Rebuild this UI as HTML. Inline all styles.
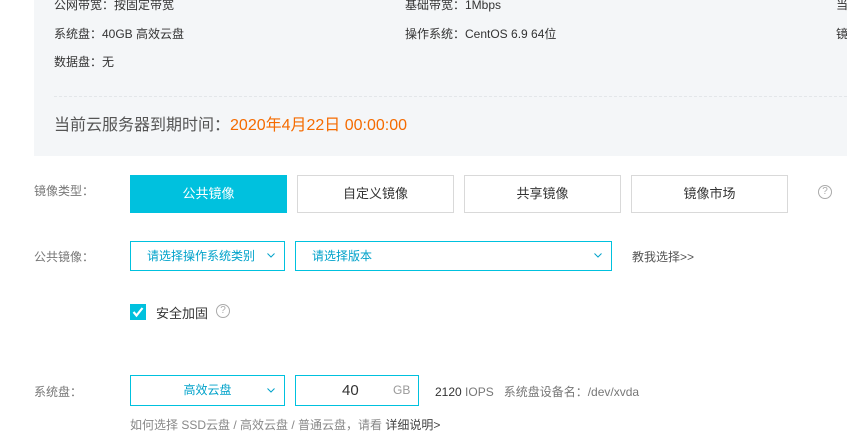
<!DOCTYPE html>
<html><head><meta charset="utf-8"><style>
*{margin:0;padding:0;box-sizing:border-box}
body{width:847px;height:435px;background:#fff;font-family:"Liberation Sans","Noto Sans CJK SC",sans-serif;font-size:12px;color:#333;position:relative;overflow:hidden}
.a{position:absolute;white-space:nowrap}
.panel{position:absolute;left:34px;top:0;width:813px;height:156px;background:#f4f6f8}
.dash{position:absolute;left:54px;top:96px;width:793px;border-top:1px dashed #e3e6e9}
.btn{position:absolute;top:175px;height:38px;width:157px;border:1px solid #d9d9d9;background:#fff;text-align:center;line-height:36px;font-size:13px;color:#333}
.sel{position:absolute;border:1px solid #00c1de;background:#fff;color:#00a2ca;font-size:12px;line-height:28px}
.lbl{color:#777}
.arr{position:absolute;right:9px;top:50%;margin-top:-3px;width:8px;height:5px}
</style></head><body>
<div class="panel"></div>
<div class="a" style="left:54px;top:-4px">公网带宽：按固定带宽</div>
<div class="a" style="left:405px;top:-4px">基础带宽：1Mbps</div>
<div class="a" style="left:836px;top:-4px">当</div>
<div class="a" style="left:54px;top:25px">系统盘：40GB 高效云盘</div>
<div class="a" style="left:405px;top:25px">操作系统：CentOS 6.9 64位</div>
<div class="a" style="left:836px;top:25px">镜</div>
<div class="a" style="left:54px;top:53px">数据盘：无</div>
<div class="dash"></div>
<div class="a" style="left:54px;top:111px;font-size:16px;color:#555">当前云服务器到期时间：<span style="color:#f56b00">2020年4月22日 00:00:00</span></div>

<div class="a lbl" style="left:34px;top:182px">镜像类型：</div>
<div class="btn" style="left:130px;background:#00c1de;border-color:#00c1de;color:#fff">公共镜像</div>
<div class="btn" style="left:297px">自定义镜像</div>
<div class="btn" style="left:464px">共享镜像</div>
<div class="btn" style="left:631px">镜像市场</div>
<div class="a" style="left:818px;top:185px;width:14px;height:14px;border:1px solid #aaa;border-radius:50%;font-size:10px;line-height:12px;text-align:center;color:#aaa">?</div>

<div class="a lbl" style="left:34px;top:248px">公共镜像：</div>
<div class="sel" style="left:130px;top:241px;width:155px;height:30px;padding-left:16px">请选择操作系统类别<svg class="arr" viewBox="0 0 8 5"><path d="M0.5 0.5L4 4L7.5 0.5" fill="none" stroke="#00a2ca" stroke-width="1"/></svg></div>
<div class="sel" style="left:295px;top:241px;width:317px;height:30px;padding-left:16px">请选择版本<svg class="arr" viewBox="0 0 8 5"><path d="M0.5 0.5L4 4L7.5 0.5" fill="none" stroke="#00a2ca" stroke-width="1"/></svg></div>
<div class="a" style="left:632px;top:248px;color:#555">教我选择&gt;&gt;</div>

<div class="a" style="left:130px;top:304px;width:16px;height:16px;background:#00c1de"><svg width="16" height="16" viewBox="0 0 16 16"><path d="M3.5 8L6.5 11.5L12.5 4" fill="none" stroke="#fff" stroke-width="2.2"/></svg></div>
<div class="a" style="left:156px;top:303px;font-size:13px">安全加固</div>
<div class="a" style="left:216px;top:304px;width:14px;height:14px;border:1px solid #aaa;border-radius:50%;font-size:10px;line-height:12px;text-align:center;color:#aaa">?</div>

<div class="a lbl" style="left:34px;top:383px">系统盘：</div>
<div class="sel" style="left:130px;top:375px;width:155px;height:31px;text-align:center;line-height:29px">高效云盘<svg class="arr" viewBox="0 0 8 5"><path d="M0.5 0.5L4 4L7.5 0.5" fill="none" stroke="#00a2ca" stroke-width="1"/></svg></div>
<div class="sel" style="left:295px;top:375px;width:124px;height:31px;line-height:29px;color:#333"><span class="a" style="left:46px;font-size:15px">40</span><span class="a" style="left:97px;color:#999">GB</span></div>
<div class="a" style="left:435px;top:383px">2120 <span style="color:#777">IOPS &nbsp; 系统盘设备名：/dev/xvda</span></div>
<div class="a" style="left:130px;top:416px;color:#888">如何选择 SSD云盘 / 高效云盘 / 普通云盘，请看 <span style="color:#444">详细说明&gt;</span></div>
</body></html>
